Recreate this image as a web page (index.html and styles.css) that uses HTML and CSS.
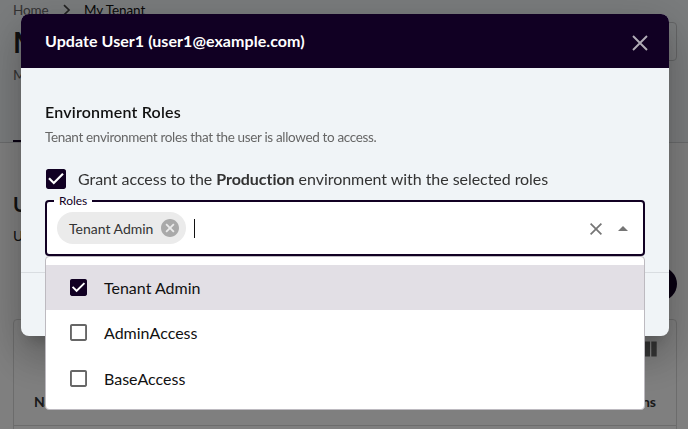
FILE: index.html
```html
<!DOCTYPE html>
<html lang="en">
<head>
<meta charset="utf-8">
<title>My Tenant</title>
<link rel="stylesheet" href="styles.css">
</head>
<body>
<div class="page">
  <header class="page-header">
    <nav class="crumbs"><span class="crumb-link">Home</span>
      <svg class="crumb-sep" viewBox="0 0 10 12"><path d="M2 1.2 7 6 2 10.8" fill="none" stroke="#444" stroke-width="1.7"/></svg>
      <span>My Tenant</span></nav>
    <div class="title-row"><h1>M</h1><div class="outline-button"></div></div>
    <p class="lead">M</p>
    <div class="tab"></div>
  </header>
  <main class="content">
    <h2>U</h2>
    <p class="hint">U</p>
    <div class="actions"><div class="pill"></div></div>
    <section class="table">
      <div class="toolbar"><svg viewBox="0 0 18 16"><path d="M0 .5h5v15H0zM6 .5h5v15H6zM12.300 .5h5.400v15h-5.400z" fill="#6a6a6a"/></svg></div>
      <div class="columns"><span>Name</span><span class="mid">g</span><span>Actions</span></div>
    </section>
  </main>
</div>
<div class="backdrop">
  <div class="dialog">
    <div class="dialog-title"><span>Update User1 (user1@example.com)</span>
      <svg class="close" viewBox="0 0 16 16"><path d="M1 1 15 15M15 1 1 15" fill="none" stroke="#b1acb6" stroke-width="1.9"/></svg></div>
    <div class="dialog-body">
      <h3>Environment Roles</h3>
      <p class="desc">Tenant environment roles that the user is allowed to access.</p>
      <div class="grant">
        <svg class="check-lg" viewBox="3 3 18 18"><path fill="#110023" d="M19 3H5c-1.110 0-2 .9-2 2v14c0 1.100.89 2 2 2h14c1.110 0 2-.9 2-2V5c0-1.100-.89-2-2-2z"/><path fill="#fff" d="m10 17-5-5 1.410-1.410L10 14.170l7.590-7.590L19 8z"/></svg>
        <span>Grant access to the <b>Production</b> environment with the selected roles</span>
      </div>
      <div class="select">
        <span class="float-label">Roles</span>
        <div class="chip"><span>Tenant Admin</span>
          <svg viewBox="2 2 20 20"><path fill="#a9a9a9" d="M12 2C6.470 2 2 6.470 2 12s4.470 10 10 10 10-4.470 10-10S17.530 2 12 2zm5 13.590L15.590 17 12 13.410 8.410 17 7 15.590 10.590 12 7 8.410 8.410 7 12 10.590 15.590 7 17 8.410 13.410 12 17 15.590z"/></svg>
        </div>
        <span class="caret"></span>
        <svg class="clear" viewBox="5 5 14 14"><path fill="#757575" d="M19 6.410 17.590 5 12 10.590 6.410 5 5 6.410 10.590 12 5 17.590 6.410 19 12 13.410 17.590 19 19 17.590 13.410 12z"/></svg>
        <svg class="arrow" viewBox="0 0 10 5"><path fill="#757575" d="M0 5 5 0l5 5z"/></svg>
        <div class="menu">
          <div class="option selected"><svg viewBox="3 3 18 18"><path fill="#110023" d="M19 3H5c-1.110 0-2 .9-2 2v14c0 1.100.89 2 2 2h14c1.110 0 2-.9 2-2V5c0-1.100-.89-2-2-2z"/><path fill="#fff" d="m10 17-5-5 1.410-1.410L10 14.170l7.590-7.590L19 8z"/></svg>Tenant Admin</div>
          <div class="option"><svg viewBox="3 3 18 18"><path fill="#666" d="M19 5v14H5V5h14m0-2H5c-1.100 0-2 .9-2 2v14c0 1.100.9 2 2 2h14c1.100 0 2-.9 2-2V5c0-1.100-.9-2-2-2z"/></svg>AdminAccess</div>
          <div class="option"><svg viewBox="3 3 18 18"><path fill="#666" d="M19 5v14H5V5h14m0-2H5c-1.100 0-2 .9-2 2v14c0 1.100.9 2 2 2h14c1.100 0 2-.9 2-2V5c0-1.100-.9-2-2-2z"/></svg>BaseAccess</div>
        </div>
      </div>
    </div>
    <div class="dialog-actions"></div>
  </div>
</div>
</body>
</html>
```
FILE: styles.css
```css
* { box-sizing: border-box; }
body, h1, h2, h3, p { margin: 0; }
body { font-family: Lato, sans-serif; color: #222; height: 429px; overflow: hidden; }
svg { display: block; flex: none; }
.page { height: 429px; overflow: hidden; background: #fff; }
.page-header { height: 143px; padding: 0 11px 0 13px; background: #f5f8fa; border-bottom: 1px solid #d4d6d8; }
.crumbs { display: flex; align-items: center; height: 20px; font-size: 13.500px; letter-spacing: -.1px; color: #111; }
.crumb-link { width: 35px; color: #666; }
.crumb-sep { width: 10px; height: 12px; margin: 0 12px 0 14px; }
.title-row { display: flex; justify-content: space-between; height: 46px; padding-top: 2px; }
h1 { font-size: 29px; line-height: 40px; font-weight: 700; }
.outline-button { width: 100px; height: 39px; border: 1px solid #c9cbcd; border-radius: 4px; }
.lead { height: 74px; font-size: 14px; line-height: 18px; color: #666; }
.tab { width: 80px; height: 2px; background: #110023; }
.content { padding: 49px 11px 0 13px; }
h2 { font-size: 20px; line-height: 24px; font-weight: 700; }
.hint { margin-top: 10px; font-size: 14px; line-height: 20px; }
.actions { display: flex; justify-content: flex-end; margin-top: 21px; }
.pill { width: 130px; height: 34px; border-radius: 17px; background: #110023; }
.table { margin-top: 18px; height: 130px; border: 1px solid #d9d9d9; border-radius: 4px; }
.toolbar { display: flex; justify-content: flex-end; height: 60px; padding: 21px 19px 0 0; }
.toolbar svg { width: 18px; height: 16px; }
.columns { display: grid; grid-template-columns: 219px 1fr auto; height: 46px; padding: 10px 20px 0; border-bottom: 1px solid #d9d9d9; font-size: 14px; line-height: 24px; font-weight: 700; color: #333; }
.backdrop { position: fixed; inset: 0; display: flex; justify-content: center; align-items: flex-start; padding: 14px 19px 0 21px; background: rgba(0,0,0,.5); }
.dialog { width: 648px; height: 322px; display: flex; flex-direction: column; background: #f0f4f7; border-radius: 8px; box-shadow: 0 11px 15px -7px rgba(0,0,0,.2), 0 24px 38px 3px rgba(0,0,0,.14), 0 9px 46px 8px rgba(0,0,0,.12); }
.dialog-title { display: flex; align-items: center; justify-content: space-between; height: 54px; padding: 0 21px 0 24px; border-radius: 8px 8px 0 0; background: #110023; color: #fff; font-size: 16px; letter-spacing: .06px; font-weight: 700; }
.dialog-title span { padding-bottom: 2px; }
.close { width: 16px; height: 16px; margin-top: 3px; }
.dialog-body { height: 204px; padding: 32px 24px 0; }
h3 { font-size: 16px; line-height: 24px; font-weight: 600; letter-spacing: .2px; color: #111; }
.desc { margin-top: 3px; font-size: 13.500px; letter-spacing: -.34px; line-height: 20px; color: #666; }
.grant { display: flex; align-items: center; gap: 12px; height: 24px; margin: 20px 0 9px 1px; font-size: 16px; letter-spacing: -.05px; color: #333; white-space: nowrap; }
.grant span { padding-bottom: 2px; }
.check-lg { width: 20px; height: 20px; }
.select { position: relative; display: flex; align-items: center; height: 56px; padding: 0 15px 0 10px; border: 2px solid #110023; border-radius: 4px; background: #fff; }
.float-label { position: absolute; top: -10px; left: 7px; padding: 0 5px; font-size: 12px; line-height: 18px; color: #110023; background: linear-gradient(#f0f4f7 8px, #fff 8px); }
.chip { display: flex; align-items: center; justify-content: space-between; width: 129px; height: 32px; padding: 0 7px 0 12px; border-radius: 16px; background: #ebebeb; font-size: 14px; color: #333; }
.chip svg { width: 18px; height: 18px; }
.caret { width: 1px; height: 19px; margin-left: 8px; background: #111; }
.clear { width: 12px; height: 12px; margin: 2px 0 0 auto; }
.arrow { width: 10px; height: 5px; margin-left: 16px; }
.menu { position: absolute; top: 54px; left: -2px; width: 600px; height: 154px; padding-top: 8px; border: 1px solid #bdbac0; border-radius: 4px; background: #fff; }
.option { display: flex; align-items: center; gap: 17px; height: 45.300px; padding-left: 24px; font-size: 16px; color: #111; }
.option svg { width: 17px; height: 17px; }
.selected { background: #e2dfe5; }
.dialog-actions { flex: 1; border-top: 1px solid #d9dde1; }
```
